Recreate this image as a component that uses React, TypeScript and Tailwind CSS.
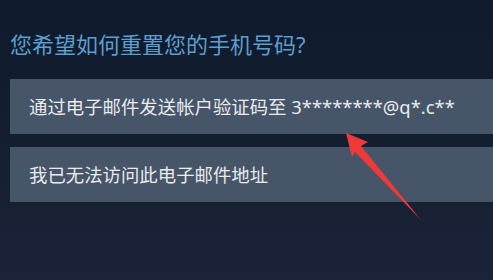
export default function App() {
  return (
    <div
      className="relative h-[280px] w-[493px] overflow-hidden bg-gradient-to-b from-[#0f1a2d] to-[#1a2337] pl-[10px]"
      style={{ fontFamily: '"Noto Sans", "Noto Sans CJK SC", sans-serif' }}
    >
      <h1 className="pt-[29px] text-[22px] leading-[30px] text-[#5c9ecc]">您希望如何重置您的手机号码?</h1>
      <div className="mt-[20px] flex flex-col gap-[13px]">
        <div className="flex h-[55px] items-center bg-[#475569] pl-[19px] pt-[1px] text-[18.4px] text-[#e8ebef]">
          通过电子邮件发送帐户验证码至 3********@q*.c**
        </div>
        <div className="flex h-[55px] items-center bg-[#475569] pl-[19px] pt-[1px] text-[18.4px] text-[#e8ebef]">
          我已无法访问此电子邮件地址
        </div>
      </div>
      <svg className="absolute left-0 top-0" width="493" height="280" viewBox="0 0 493 280">
        <polygon points="346,133 368,142 361,146 421,220 355,152 352,157" fill="#f03a3a" />
      </svg>
    </div>
  );
}
